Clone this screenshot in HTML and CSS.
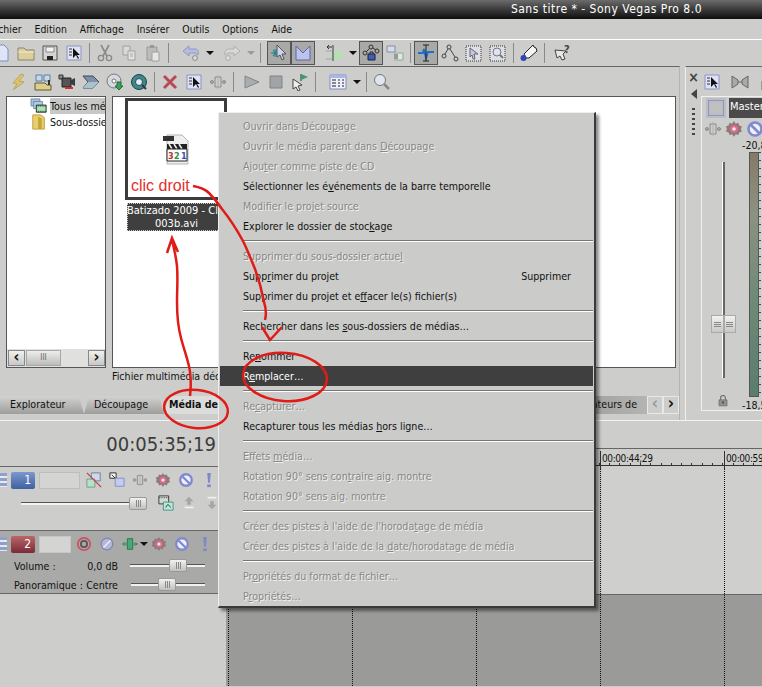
FILE: index.html
```html
<!DOCTYPE html>
<html lang="fr">
<head>
  <meta charset="UTF-8">
  <meta name="viewport" content="width=device-width, initial-scale=1.0">
  <title>Sans titre * - Sony Vegas Pro 8.0</title>
  <link rel="stylesheet" href="styles.css">
</head>
<body>

  <!-- icones de la barre d'outils -->
  <svg class="sprite" xmlns="http://www.w3.org/2000/svg">
    <symbol id="i-doc" viewBox="0 0 18 18"><path d="M3 1h8l4 4v12H3z" fill="#dfe4f6" stroke="#7f8fc8"/></symbol>
    <symbol id="i-folder" viewBox="0 0 18 18"><path d="M1 4h6l2 2h8v10H1z" fill="#dccf9f" stroke="#8c8464"/><path d="M1 8h16" stroke="#f3ecca"/></symbol>
    <symbol id="i-disk" viewBox="0 0 18 18"><path d="M2 2h14v14H2z" fill="#d5d5d3" stroke="#555"/><path d="M5 3h8v5H5z" fill="#f4f4f4" stroke="#888"/><path d="M6 12h6v4H6z" fill="#222"/></symbol>
    <symbol id="i-props" viewBox="0 0 18 18"><path d="M2 2h14v14H2z" fill="#dfe2f4" stroke="#8b93c4"/><path d="M4 5h3M4 8h3M4 11h3" stroke="#333"/><path d="M8 4v10l3-3 2 4 1-1-2-3h3z" fill="#111"/></symbol>
    <symbol id="i-cut" viewBox="0 0 18 18"><path d="M5 1l6 11M13 1L7 12" stroke="#8a8a8a" stroke-width="1.6" fill="none"/><circle cx="5" cy="14" r="2.6" fill="none" stroke="#8a8a8a" stroke-width="1.4"/><circle cx="13" cy="14" r="2.6" fill="none" stroke="#8a8a8a" stroke-width="1.4"/></symbol>
    <symbol id="i-copy" viewBox="0 0 18 18"><path d="M3 2h7v9H3z" fill="#d9d9d7" stroke="#a0a09e"/><path d="M8 7h7v9H8z" fill="#e2e2e0" stroke="#a0a09e"/><path d="M10 10h3M10 12h3" stroke="#aaa"/></symbol>
    <symbol id="i-paste" viewBox="0 0 18 18"><path d="M3 3h10v13H3z" fill="#bcbcba" stroke="#999"/><path d="M6 1h4v3H6z" fill="#999"/><path d="M8 8h7v9H8z" fill="#e6e6e4" stroke="#a0a09e"/></symbol>
    <symbol id="i-undo" viewBox="0 0 18 18"><path d="M1 7l6-5v3h6c3 0 4 3 3 6l-3-2H7v3z" fill="#b4bce0" stroke="#8f98c6"/><circle cx="13" cy="14" r="2.4" fill="#ddd" stroke="#888"/></symbol>
    <symbol id="i-redo" viewBox="0 0 18 18"><path d="M17 7l-6-5v3H6C3 5 1 8 2 11l3-2h6v3z" fill="#d8d8d6" stroke="#b0b0ae"/><circle cx="5" cy="14" r="2.4" fill="#ddd" stroke="#aaa"/></symbol>
    <symbol id="i-snap" viewBox="0 0 18 18"><path d="M1 9h7M5 5v8" stroke="#2f9a8a" stroke-width="1.5"/><path d="M3 6l4 6M7 6l-4 6" stroke="#2f7a9a"/><path d="M7 1l9 9-4 0 2 5-2 1-2-5-3 2z" fill="#cdd3f0" stroke="#555"/></symbol>
    <symbol id="i-env" viewBox="0 0 18 18"><path d="M2 2v14h14V2L9 9z" fill="#bcc4ec" stroke="#5a67ad"/></symbol>
    <symbol id="i-split" viewBox="0 0 18 18"><path d="M8 1v16" stroke="#666" stroke-width="1.4"/><path d="M9 7h8v8H9z" fill="#b4e0b4"/><path d="M1 7h6M1 15h6" stroke="#9aa" /><path d="M2 3h5M4 1L2 3l2 2" stroke="#333" fill="none"/></symbol>
    <symbol id="i-lock-net" viewBox="0 0 18 18"><circle cx="3" cy="9" r="2" fill="none" stroke="#333"/><circle cx="9" cy="3" r="2" fill="none" stroke="#333"/><circle cx="15" cy="7" r="2" fill="none" stroke="#333"/><path d="M4 8l4-4M11 4l3 2" stroke="#333"/><path d="M6 10h7v6H6z" fill="#3a5fb4" stroke="#223"/><path d="M8 10V8h3v2" fill="none" stroke="#223"/></symbol>
    <symbol id="i-group" viewBox="0 0 18 18"><path d="M1 2h8v6H1z" fill="#cfe0e8" stroke="#88a"/><path d="M9 9h8v7H9z" fill="#dfe8d8" stroke="#8a9"/><path d="M8 10h4v5H8z" fill="#999"/></symbol>
    <symbol id="i-motion" viewBox="0 0 18 18"><path d="M6 1h10v9H6z" fill="#cfd8e8" stroke="#6a7a98"/><path d="M1 8h9v9H1z" fill="#b8e0c8" stroke="#6a9a88"/><path d="M1 1l16 16" stroke="#c04040" stroke-width="1.400"/></symbol>
    <symbol id="i-pan" viewBox="0 0 18 18"><path d="M1 1h7v6H1z" fill="#f4f4f4" stroke="#222"/><path d="M3 3l4 4" stroke="#222"/><path d="M7 7h10v9H7z" fill="#c4cdf0" stroke="#8088c8"/></symbol>
    <symbol id="i-norm" viewBox="0 0 18 18"><path d="M1 9h5l1-4 2 9 2-6h6" fill="none" stroke="#1f6fd0" stroke-width="2"/><path d="M9 1v16M6 1h6M6 17h6" stroke="#222"/></symbol>
    <symbol id="i-nodes" viewBox="0 0 18 18"><circle cx="3" cy="12" r="2" fill="none" stroke="#444"/><circle cx="8" cy="3" r="2" fill="none" stroke="#444"/><circle cx="15" cy="15" r="2" fill="none" stroke="#444"/><path d="M4 10l3-5M9 5l5 8" stroke="#444"/></symbol>
    <symbol id="i-marq" viewBox="0 0 18 18"><path d="M1 2h15v15H1z" fill="#dfdfe8" stroke="#333" stroke-dasharray="1 1"/><path d="M5 4l8 6-4 0 1 5-2 0-1-4-2 2z" fill="#c4c8e4" stroke="#666"/></symbol>
    <symbol id="i-marq-zoom" viewBox="0 0 18 18"><path d="M1 2h15v15H1z" fill="#dfdfe8" stroke="#333" stroke-dasharray="1 1"/><circle cx="8" cy="8" r="4" fill="#dce4f4" stroke="#777"/><path d="M11 11l3 3" stroke="#777" stroke-width="2"/></symbol>
    <symbol id="i-hand" viewBox="0 0 18 18"><path d="M4 10l9-9 1 2 2 1 1 3-8 7-3 0z" fill="#f6f6f6" stroke="#222"/><circle cx="3.500" cy="14" r="3" fill="#3146b0"/></symbol>
    <symbol id="i-help" viewBox="0 0 18 18"><path d="M1 6l11 1-3 3 2 5-3 1-2-4-3 2z" fill="#e8e8e6" stroke="#444"/><text x="10" y="9" font-size="11" font-weight="bold" font-family="DejaVu Sans" fill="#444">?</text></symbol>
    <symbol id="i-bolt" viewBox="0 0 18 18"><path d="M11 1L3 10l4 1-4 6 11-8-5-1 5-6z" fill="#dcc46a" stroke="#b8a65c"/></symbol>
    <symbol id="i-explore" viewBox="0 0 18 18"><path d="M2 2h6v6H2zM10 2h6v6h-6z" fill="#c4dae8" stroke="#5a80a8"/><path d="M1 10h10l2 2h4v5H1z" fill="#dccf8c" stroke="#605a30"/><path d="M14 7h2v5h-2z" fill="#333"/></symbol>
    <symbol id="i-cam" viewBox="0 0 18 18"><path d="M1 2h4v4H1z" fill="#8a8a92" stroke="#333"/><path d="M4 5h9v9H4z" fill="#555" stroke="#222"/><path d="M13 7l4-2v8l-4-2z" fill="#3a3a42"/><path d="M7 15h8" stroke="#d03030" stroke-width="2"/></symbol>
    <symbol id="i-prism" viewBox="0 0 18 18"><path d="M1 3h10l6 6-6 6H1l5-6z" fill="#7e90a8" stroke="#3a4a5a"/><path d="M6 9h11l-6 6H1z" fill="#a9c2cc"/></symbol>
    <symbol id="i-cd" viewBox="0 0 18 18"><circle cx="8" cy="8" r="7" fill="#d6dae0" stroke="#777"/><circle cx="8" cy="8" r="2" fill="#fff" stroke="#777"/><path d="M11 9h4v4h2l-4 4-4-4h2z" fill="#3aa05a" stroke="#206a3a"/></symbol>
    <symbol id="i-globe" viewBox="0 0 18 18"><circle cx="9" cy="9" r="7.500" fill="#3a8a8a" stroke="#223f4f"/><circle cx="9" cy="9" r="3.500" fill="#e4ecf4" stroke="#345"/><path d="M12 12l4 4" stroke="#334" stroke-width="2"/></symbol>
    <symbol id="i-del" viewBox="0 0 18 18"><path d="M3 3l12 12M15 3L3 15" stroke="#b84a58" stroke-width="3"/></symbol>
    <symbol id="i-bus" viewBox="0 0 18 18"><path d="M6 4h6v10H6z" fill="none" stroke="#8a8a88"/><path d="M1 9h3M14 9h3" stroke="#8a8a88"/><circle cx="3" cy="9" r="1.500" fill="none" stroke="#8a8a88"/><circle cx="15" cy="9" r="1.500" fill="none" stroke="#8a8a88"/><path d="M9 2v14" stroke="#b0b0ae"/></symbol>
    <symbol id="i-bus-on" viewBox="0 0 18 18"><path d="M6 3h6v12H6z" fill="#4aa878" stroke="#2a7050"/><path d="M0 9h4M14 9h4" stroke="#2a8a60"/><circle cx="3" cy="9" r="1.500" fill="none" stroke="#2a8a60"/><circle cx="15" cy="9" r="1.500" fill="none" stroke="#2a8a60"/></symbol>
    <symbol id="i-play" viewBox="0 0 18 18"><path d="M2 3l14 6-14 6z" fill="#a8aeb0" stroke="#7f8688"/></symbol>
    <symbol id="i-stop" viewBox="0 0 18 18"><path d="M3 3h12v12H3z" fill="#a0a4a6" stroke="#808486"/></symbol>
    <symbol id="i-flag" viewBox="0 0 18 18"><path d="M10 1v7" stroke="#333"/><path d="M10 1l7 3-7 3z" fill="#3a9a6a"/><path d="M2 6l9 6-4 1 2 4-2 1-2-4-3 2z" fill="#eee" stroke="#444"/></symbol>
    <symbol id="i-table" viewBox="0 0 18 18"><path d="M1 2h16v14H1z" fill="#eef0fa" stroke="#7f8cc8"/><path d="M1 2h16v3H1z" fill="#aab6e8"/><path d="M3 7h4M3 10h4M3 13h4M9 7h2M9 10h2M9 13h2M13 7h2M13 10h2M13 13h2" stroke="#222"/></symbol>
    <symbol id="i-zoom" viewBox="0 0 18 18"><circle cx="7" cy="7" r="5.500" fill="#dfe6f2" stroke="#777"/><path d="M11 11l5 5" stroke="#888" stroke-width="2.500"/></symbol>
    <symbol id="i-fit" viewBox="0 0 18 18"><path d="M1 3l6 4v4l-6 4zM17 3l-6 4v4l6 4z" fill="#aaa" stroke="#666"/><path d="M7 9h4" stroke="#666"/></symbol>
    <symbol id="i-fx" viewBox="0 0 18 18"><path d="M9 0l2 3 3-1 1 3 3 1-1 3 1 3-3 1-1 3-3-1-2 3-2-3-3 1-1-3-3-1 1-3-1-3 3-1 1-3 3 1z" transform="translate(1 1) scale(.88)" fill="#8a7a78"/><circle cx="9" cy="9" r="4" fill="#e06a8a"/><circle cx="9" cy="9" r="1.800" fill="#eee"/></symbol>
    <symbol id="i-no" viewBox="0 0 18 18"><circle cx="9" cy="9" r="6.500" fill="#eef0fa" stroke="#7f8ad0" stroke-width="2.600"/><path d="M5 5l8 8" stroke="#7f8ad0" stroke-width="2.600"/></symbol>
    <symbol id="i-solo" viewBox="0 0 18 18"><path d="M7 1h4l-1 11H8z" fill="#8088c8"/><path d="M7 14h4v3H7z" fill="#8088c8"/></symbol>
    <symbol id="i-rec" viewBox="0 0 18 18"><circle cx="9" cy="9" r="7" fill="none" stroke="#d05060" stroke-width="2"/><circle cx="9" cy="9" r="3.500" fill="none" stroke="#555" stroke-width="2"/></symbol>
    <symbol id="i-mute2" viewBox="0 0 18 18"><circle cx="9" cy="9" r="6.500" fill="#b4b8d8" stroke="#7f84b8" stroke-width="1.400"/><path d="M5 13l8-8" stroke="#eee" stroke-width="1.600"/></symbol>
    <symbol id="i-comp" viewBox="0 0 18 18"><path d="M1 1h11v9H1z" fill="#d0d8d0" stroke="#333"/><path d="M1 3h11" stroke="#333" stroke-dasharray="1 1"/><path d="M6 8h11v9H6z" fill="#b8e8d8" stroke="#4a8a8a"/><path d="M9 14c1-4 3-4 5 0" fill="none" stroke="#222"/></symbol>
    <symbol id="i-up" viewBox="0 0 18 18"><path d="M9 2l5 5h-3v4H7V7H4z" fill="#a4a8a4"/><path d="M4 14h10" stroke="#f0f0ee" stroke-width="2"/></symbol>
    <symbol id="i-down" viewBox="0 0 18 18"><path d="M9 16l5-5h-3V7H7v4H4z" fill="#a4a8a4"/><path d="M4 3h10" stroke="#f0f0ee" stroke-width="2"/></symbol>
    <symbol id="i-lock" viewBox="0 0 18 18"><path d="M3 8h12v9H3z" fill="#8f8f8f" stroke="#666"/><path d="M5.500 8V5a3.500 3.500 0 0 1 7 0v3" fill="none" stroke="#666" stroke-width="1.600"/><circle cx="9" cy="12" r="1.500" fill="#444"/></symbol>
  </svg>

  <div class="titlebar">Sans titre * - Sony Vegas Pro 8.0</div>

  <nav class="menubar">
    <span class="menu-first">Fichier</span>
    <span>Edition</span>
    <span>Affichage</span>
    <span>Insérer</span>
    <span>Outils</span>
    <span>Options</span>
    <span>Aide</span>
  </nav>

  <div class="toolbar toolbar-main">
    <span class="tool"><svg><use href="#i-doc"/></svg></span>
    <span class="tool"><svg><use href="#i-folder"/></svg></span>
    <span class="tool"><svg><use href="#i-disk"/></svg></span>
    <span class="tool"><svg><use href="#i-props"/></svg></span>
    <i class="sep"></i>
    <span class="tool"><svg><use href="#i-cut"/></svg></span>
    <span class="tool"><svg><use href="#i-copy"/></svg></span>
    <span class="tool"><svg><use href="#i-paste"/></svg></span>
    <i class="sep"></i>
    <span class="tool tool-push-wide"><svg><use href="#i-undo"/></svg></span>
    <span class="drop"></span>
    <span class="tool tool-push"><svg><use href="#i-redo"/></svg></span>
    <span class="drop drop-off"></span>
    <i class="sep sep-wide"></i>
    <span class="tool pressed"><svg><use href="#i-snap"/></svg></span>
    <span class="tool pressed"><svg><use href="#i-env"/></svg></span>
    <span class="tool tool-push-wide"><svg><use href="#i-split"/></svg></span>
    <span class="drop"></span>
    <span class="tool pressed"><svg><use href="#i-lock-net"/></svg></span>
    <span class="tool"><svg><use href="#i-group"/></svg></span>
    <i class="sep"></i>
    <span class="tool pressed"><svg><use href="#i-norm"/></svg></span>
    <span class="tool"><svg><use href="#i-nodes"/></svg></span>
    <span class="tool"><svg><use href="#i-marq"/></svg></span>
    <span class="tool"><svg><use href="#i-marq-zoom"/></svg></span>
    <i class="sep"></i>
    <span class="tool"><svg><use href="#i-hand"/></svg></span>
    <i class="sep sep-wide"></i>
    <span class="tool"><svg><use href="#i-help"/></svg></span>
  </div>

  <div class="workspace">
    <section class="left-dock">
      <div class="toolbar toolbar-media">
        <span class="tool"><svg><use href="#i-bolt"/></svg></span>
        <span class="tool"><svg><use href="#i-explore"/></svg></span>
        <span class="tool"><svg><use href="#i-cam"/></svg></span>
        <span class="tool"><svg><use href="#i-prism"/></svg></span>
        <span class="tool"><svg><use href="#i-cd"/></svg></span>
        <span class="tool"><svg><use href="#i-globe"/></svg></span>
        <i class="sep"></i>
        <span class="tool"><svg><use href="#i-del"/></svg></span>
        <span class="tool"><svg><use href="#i-props"/></svg></span>
        <span class="tool"><svg><use href="#i-bus"/></svg></span>
        <i class="sep sep-wide"></i>
        <span class="tool"><svg><use href="#i-play"/></svg></span>
        <span class="tool"><svg><use href="#i-stop"/></svg></span>
        <span class="tool"><svg><use href="#i-flag"/></svg></span>
        <i class="sep"></i>
        <span class="tool tool-push-wide"><svg><use href="#i-table"/></svg></span>
        <span class="drop"></span>
        <i class="sep"></i>
        <span class="tool"><svg><use href="#i-zoom"/></svg></span>
      </div>

      <div class="panes">
        <div class="tree">
          <div class="tree-list">
            <div class="tree-row">
              <svg viewBox="0 0 18 18"><path d="M0 1h10v8H0z" fill="#a8c0dc" stroke="#6a88a8"/><path d="M3 4h10v8H3z" fill="#b4cce4" stroke="#6a88a8"/><path d="M6 8h11v8H6z" fill="#a8e4b4" stroke="#222"/><path d="M6 9h11M6 15h11" stroke="#222" stroke-dasharray="1 1"/></svg>
              <span class="tree-label selected">Tous les médias</span>
            </div>
            <div class="tree-row">
              <svg viewBox="0 0 18 18"><path d="M2 1h9l4 3v13H2z" fill="#e8cf6a" stroke="#b89c3a"/><path d="M8 3l4 2v12H8z" fill="#c4a43e"/></svg>
              <span class="tree-label">Sous-dossiers</span>
            </div>
          </div>
          <div class="hscroll">
            <span class="scroll-btn">‹</span>
            <span class="scroll-thumb">III</span>
            <span class="scroll-btn scroll-next">›</span>
          </div>
        </div>

        <div class="media-list">
          <figure class="clip">
            <div class="clip-frame">
              <svg class="clip-icon" viewBox="0 0 28 32">
                <path d="M5 2h15l6 6v23H5z" fill="#efefef" stroke="#b4b4b4"/>
                <path d="M1 3h11v5H1z" fill="#333"/>
                <path d="M5 11h20v5H5z" fill="#222"/>
                <path d="M7 11l3 5M12 11l3 5M17 11l3 5" stroke="#eee" stroke-width="1.500"/>
                <path d="M5 16h20v12H5z" fill="#fff" stroke="#222"/>
                <text x="6" y="26" class="num num-r">3</text>
                <text x="12" y="26" class="num num-g">2</text>
                <text x="19" y="26" class="num num-b">1</text>
              </svg>
            </div>
            <figcaption>Batizado 2009 - Clip<br>003b.avi</figcaption>
          </figure>
        </div>
      </div>

      <p class="status">Fichier multimédia décodé</p>

      <div class="tabs">
        <span class="tab tab-first">Explorateur</span>
        <span class="tab">Découpage</span>
        <span class="tab tab-active">Média de projet</span>
        <span class="tab-rest">Générateurs de</span>
        <span class="tab-nav tab-nav-off">‹</span>
        <span class="tab-nav">›</span>
      </div>
    </section>

    <aside class="right-dock">
      <div class="grip">
        <span class="grip-close">×</span>
        <span class="grip-arrow"></span>
        <span class="grip-dots"></span>
      </div>
      <div class="mixer-col">
        <div class="mixer-tools">
          <span class="tool"><svg><use href="#i-props"/></svg></span>
          <span class="tool"><svg><use href="#i-fit"/></svg></span>
          <span class="tool"><svg><use href="#i-lock"/></svg></span>
        </div>
        <div class="mixer">
          <div class="master-head">
            <span class="master-btn"></span>
            <span class="master-name">Master</span>
          </div>
          <div class="master-icons">
            <span class="tool-sm"><svg><use href="#i-bus"/></svg></span>
            <span class="tool-sm"><svg><use href="#i-fx"/></svg></span>
            <span class="tool-sm"><svg><use href="#i-no"/></svg></span>
          </div>
          <div class="level-top">-20,8</div>
          <div class="fader-row">
            <div class="fader-col">
              <div class="fader-track">
                <div class="fader-thumb"><i></i><i></i></div>
              </div>
              <svg class="fader-lock"><use href="#i-lock"/></svg>
            </div>
            <div class="meter-col">
              <div class="meter"></div>
            </div>
          </div>
          <div class="level-bottom">-18,5</div>
        </div>
      </div>
    </aside>
  </div>

  <div class="timeline">
    <div class="tracks">
      <div class="timecode">00:05:35;19</div>

      <div class="track">
        <div class="track-row">
          <span class="track-grip"></span>
          <span class="track-num track-num-video">1</span>
          <span class="track-name"></span>
          <span class="cell"><svg><use href="#i-motion"/></svg></span>
          <span class="cell"><svg><use href="#i-pan"/></svg></span>
          <span class="cell"><svg><use href="#i-bus"/></svg></span>
          <span class="cell"><svg><use href="#i-fx"/></svg></span>
          <span class="cell"><svg><use href="#i-no"/></svg></span>
          <span class="cell"><svg><use href="#i-solo"/></svg></span>
        </div>
        <div class="track-row track-row-fader">
          <div class="slider slider-level"><i class="rail"></i><i class="thumb"></i></div>
          <span class="cell cell-first"><svg><use href="#i-comp"/></svg></span>
          <span class="cell"><svg><use href="#i-up"/></svg></span>
          <span class="cell"><svg><use href="#i-down"/></svg></span>
        </div>
      </div>

      <div class="track track-audio">
        <div class="track-row">
          <span class="track-grip"></span>
          <span class="track-num track-num-audio">2</span>
          <span class="track-name track-name-audio"></span>
          <span class="cell"><svg><use href="#i-rec"/></svg></span>
          <span class="cell"><svg><use href="#i-mute2"/></svg></span>
          <span class="cell"><svg><use href="#i-bus-on"/></svg></span>
          <span class="drop drop-mini"></span>
          <span class="cell"><svg><use href="#i-fx"/></svg></span>
          <span class="cell"><svg><use href="#i-no"/></svg></span>
          <span class="cell"><svg><use href="#i-solo"/></svg></span>
        </div>
        <div class="audio-row">
          <span class="audio-label">Volume :</span>
          <span class="audio-value">0,0 dB</span>
          <div class="slider slider-vol"><i class="rail"></i><i class="thumb"></i><i class="rail"></i></div>
        </div>
        <div class="audio-row">
          <span class="audio-label">Panoramique :</span>
          <span class="audio-value">Centre</span>
          <div class="slider slider-pan"><i class="rail"></i><i class="thumb"></i><i class="rail"></i></div>
        </div>
      </div>
    </div>

    <div class="timeline-main">
      <div class="timeline-head"></div>
      <div class="ruler">
        <span class="mark">00:00:00;00</span>
        <span class="mark">00:00:14;29</span>
        <span class="mark">00:00:29;29</span>
        <span class="mark">00:00:44;29</span>
        <span class="mark mark-last">00:00:59;28</span>
      </div>
      <div class="timeline-body">
        <i class="beat"></i><i class="beat"></i><i class="beat"></i><i class="beat"></i><i class="beat"></i>
      </div>
    </div>
  </div>

  <!-- menu contextuel -->
  <div class="context-menu">
    <div class="item off">Ouvrir dans Décou<u>p</u>age</div>
    <div class="item off">Ouvrir le média parent dans <u>D</u>écoupage</div>
    <div class="item off">Ajou<u>t</u>er comme piste de CD</div>
    <div class="item">Sélectionner les é<u>v</u>énements de la barre temporelle</div>
    <div class="item off">Modifier le pro<u>j</u>et source</div>
    <div class="item">Explorer le dossier de stoc<u>k</u>age</div>
    <hr>
    <div class="item off">Supprimer du sous-dossier actue<u>l</u></div>
    <div class="item item-split">Supp<u>r</u>imer du projet<span class="shortcut">Supprimer</span></div>
    <div class="item">Supprimer du projet et e<u>f</u>facer le(s) fichier(s)</div>
    <hr>
    <div class="item">Rechercher dans les <u>s</u>ous-dossiers de médias…</div>
    <hr>
    <div class="item">Re<u>n</u>ommer</div>
    <div class="item active">R<u>e</u>mplacer…</div>
    <hr>
    <div class="item off">Re<u>c</u>apturer…</div>
    <div class="item">Recapturer tous les médias <u>h</u>ors ligne…</div>
    <hr>
    <div class="item off">Effets <u>m</u>édia…</div>
    <div class="item off">Rotation 90° sens con<u>t</u>raire aig. montre</div>
    <div class="item off">Rotation 90° sens aig. montre</div>
    <hr>
    <div class="item off">Créer des pistes à l'aide de l'horoda<u>t</u>age de média</div>
    <div class="item off">Créer des pistes à l'aide de la <u>d</u>ate/horodatage de média</div>
    <hr>
    <div class="item off">Pr<u>o</u>priétés du format de fichier…</div>
    <div class="item off">P<u>r</u>opriétés…</div>
  </div>

  <!-- annotations rouges par-dessus la capture -->
  <span class="note">clic droit</span>
  <svg class="scribble" viewBox="0 0 762 687">
    <path d="M193 186c6 1 11 2 16 7 5 5 9 10 13 16 8 10 15 21 21 32 4 8 8 18 12 28 4 11 7 22 9 33 2 6 2 14 1 18M262 327l8 13 12-13"/>
    <path d="M190 396c1-8 1-16 0-24-1-10-6-22-9-34-3-11-4-24-4-36 0-12 1-24 0-36-1-9-3-18-5-26M167 253l5-15 6 14"/>
    <ellipse cx="196" cy="409" rx="32" ry="19" transform="rotate(6 196 409)"/>
    <ellipse cx="285" cy="377" rx="42" ry="24" transform="rotate(4 285 377)"/>
  </svg>

</body>
</html>
```

FILE: styles.css
```css
* {
  box-sizing: border-box;
}

body {
  position: relative;
  width: 762px;
  height: 687px;
  margin: 0;
  overflow: hidden;
  background-color: #cdcdcb;
  color: #111;
  font-family: "DejaVu Sans", Verdana, sans-serif;
  font-stretch: condensed;
  font-size: 10.6px;
}

.sprite {
  display: none;
}

svg {
  display: block;
}

/* barre de titre */
.titlebar {
  height: 19px;
  padding-right: 60px;
  background: linear-gradient(#6c6c6c, #3f3f3f 45%, #0e0e0e);
  color: #fff;
  font-size: 12px;
  letter-spacing: .5px;
  line-height: 18px;
  text-align: right;
}

.menubar {
  display: flex;
  gap: 13px;
  height: 21px;
  padding-top: 1px;
  border-bottom: 1px solid #fff;
  font-size: 10.4px;
  line-height: 19px;
}

.menu-first {
  margin-left: -9px;
}

/* barres d'outils */
.toolbar {
  display: flex;
  align-items: center;
}

.toolbar-main {
  height: 26px;
  margin-left: -10px;
}

.toolbar-media {
  height: 29px;
  margin-left: 7px;
}

.tool {
  display: flex;
  flex: none;
  align-items: center;
  justify-content: center;
  width: 24px;
  height: 24px;
}

.tool svg {
  width: 18px;
  height: 18px;
}

.tool-push {
  margin-left: 4px;
}

.tool-push-wide {
  margin-left: 7px;
}

.pressed {
  border: 1px solid #555;
  background-color: #a9a9a7;
}

.sep {
  flex: none;
  width: 1px;
  height: 20px;
  margin: 0 3px;
  background-color: #8a8a88;
}

.sep-wide {
  margin-right: 6px;
}

.drop {
  position: relative;
  flex: none;
  width: 13px;
  height: 24px;
}

.drop::after {
  content: "";
  position: absolute;
  top: 10px;
  left: 3px;
  border: 4px solid transparent;
  border-top-color: #111;
  border-bottom: 0;
}

.drop-off::after {
  border-top-color: #999;
}

.workspace {
  display: flex;
  height: 355px;
  border-bottom: 1px solid #f2f2f0;
}

/* panneau gauche */
.left-dock {
  flex: none;
  width: 680px;
  border-top: 1px solid #666;
  border-right: 1px solid #b4b4b2;
}

.panes {
  display: flex;
  gap: 6px;
  height: 272px;
  padding: 0 3px 0 6px;
}

.tree {
  display: flex;
  flex: none;
  flex-direction: column;
  justify-content: space-between;
  width: 100px;
  border: 1px solid #555;
  background-color: #fff;
  overflow: hidden;
}

.tree-list {
  padding: 1px 0 0 23px;
}

.tree-row {
  display: flex;
  gap: 2px;
  height: 16px;
  line-height: 16px;
  white-space: nowrap;
}

.tree-row svg {
  flex: none;
  width: 18px;
  height: 16px;
}

.tree-label {
  flex: 1;
  overflow: hidden;
}

.selected {
  background-color: #c8c8c6;
}

.hscroll {
  display: flex;
  height: 18px;
  padding: 1px 0 1px 1px;
  background-color: #e0e0de;
}

.scroll-btn {
  flex: none;
  width: 17px;
  border: 1px solid #888;
  background: linear-gradient(#f0f0ee, #c8c8c6);
  font-size: 16px;
  font-weight: bold;
  line-height: 12px;
  text-align: center;
}

.scroll-thumb {
  flex: none;
  width: 35px;
  margin-left: 1px;
  border: 1px solid #a8a8a6;
  background: linear-gradient(#eee, #bcbcba);
  color: #666;
  font-size: 8px;
  line-height: 13px;
  text-align: center;
}

.scroll-next {
  margin-left: auto;
}

.media-list {
  flex: 1;
  border: 1px solid #555;
  background-color: #fff;
}

.clip {
  width: 102px;
  margin: 1px 0 0 12px;
}

.clip-frame {
  display: flex;
  align-items: center;
  justify-content: center;
  height: 102px;
  border: 3px solid #3c3c3c;
}

.clip-icon {
  width: 28px;
  height: 32px;
}

.num {
  font-family: "DejaVu Sans", sans-serif;
  font-size: 9px;
  font-weight: bold;
}

.num-r {
  fill: #c03030;
}

.num-g {
  fill: #309040;
}

.num-b {
  fill: #3050b0;
}

.clip figcaption {
  width: 99px;
  margin: 3px 0 0 2px;
  padding: 1px 0;
  outline: 1px dotted #ccc;
  outline-offset: -1px;
  background-color: #3f3f3f;
  color: #fff;
  font-size: 11px;
  line-height: 13px;
  text-align: center;
  white-space: nowrap;
  overflow: hidden;
}

.status {
  height: 28px;
  margin: 0;
  padding-left: 112px;
  line-height: 16px;
}

/* onglets */
.tabs {
  display: flex;
  align-items: stretch;
  height: 18px;
  line-height: 16px;
}

.tab {
  flex: none;
  width: 80px;
  padding-left: 10px;
  background: linear-gradient(#d2d2d0, #9e9e9c);
  clip-path: polygon(5px 0, calc(100% - 5px) 0, 100% 100%, 0 100%);
}

.tab-first {
  width: 84px;
  clip-path: polygon(0 0, calc(100% - 5px) 0, 100% 100%, 0 100%);
}

.tab-active {
  width: 100px;
  padding-left: 5px;
  background: #dcdcda;
  font-weight: bold;
  white-space: nowrap;
}

.tab-rest {
  flex: 1;
  padding-right: 10px;
  overflow: hidden;
  background: linear-gradient(90deg, #6f6f6d, #8f8f8d 70%, #b4b4b2);
  text-align: right;
  white-space: nowrap;
}

.tab-nav {
  flex: none;
  width: 16px;
  border: 1px solid #e8e8e6;
  background-color: #cdcdcb;
  font-size: 17px;
  font-weight: bold;
  line-height: 13px;
  text-align: center;
}

.tab-nav-off {
  color: #9a9a98;
}

/* panneau droit */
.right-dock {
  display: flex;
  flex: 1;
  min-width: 0;
  margin-left: 5px;
  border-top: 1px solid #666;
  border-left: 1px solid #eee;
}

.grip {
  display: flex;
  flex: none;
  flex-direction: column;
  align-items: center;
  width: 15px;
  padding-top: 4px;
}

.grip-close {
  color: #444;
  font-size: 14px;
  font-weight: bold;
  line-height: 12px;
}

.grip-arrow {
  margin-top: 6px;
  border: 5px solid transparent;
  border-right: 6px solid #444;
  border-left: 0;
}

.grip-dots {
  width: 3px;
  height: 28px;
  margin-top: 9px;
  background: repeating-linear-gradient(#444 0 2px, transparent 2px 5px);
}

.mixer-col {
  flex: 1;
  min-width: 0;
  overflow: hidden;
}

.mixer-tools {
  display: flex;
  align-items: center;
  gap: 4px;
  height: 29px;
  margin-left: -1px;
}

.mixer {
  height: 315px;
  padding-left: 4px;
  border-top: 1px solid #f0f0ee;
  border-bottom: 1px solid #f0f0ee;
  border-left: 1px solid #f0f0ee;
}

.master-head {
  display: flex;
  gap: 3px;
  height: 20px;
  margin-top: 1px;
}

.master-btn {
  flex: none;
  width: 20px;
  height: 20px;
  border: 5px solid #b8bccf;
  outline: 1px solid #999;
  outline-offset: -3px;
  background-color: #c0c0be;
}

.master-name {
  flex: 1;
  padding-left: 1px;
  background-color: #4a4a4a;
  color: #fff;
  font-size: 11px;
  line-height: 18px;
  white-space: nowrap;
}

.master-icons {
  display: flex;
  align-items: center;
  gap: 3px;
  height: 20px;
  margin: 1px 0 0 -2px;
}

.tool-sm svg {
  width: 18px;
  height: 18px;
}

.level-top {
  height: 13px;
  padding-left: 36px;
  line-height: 13px;
  white-space: nowrap;
}

.fader-row {
  display: flex;
  height: 247px;
}

.fader-col {
  flex: none;
  width: 41px;
  padding-top: 10px;
}

.fader-track {
  position: relative;
  width: 3px;
  height: 216px;
  margin-left: 16px;
  border-left: 1px solid #fff;
  background-color: #666;
}

.fader-thumb {
  position: absolute;
  top: 153px;
  left: -12px;
  display: flex;
  width: 25px;
  height: 18px;
}

.fader-thumb i {
  flex: 1;
  border: 1px solid #aaa;
  background: repeating-linear-gradient(#888 0 1px, transparent 1px 2px) center / 7px 5px no-repeat, linear-gradient(#f2f2f0, #c8c8c6);
}

.fader-lock {
  width: 12px;
  height: 13px;
  margin: 16px 0 0 11px;
}

.meter-col {
  width: 16px;
  padding-left: 2px;
  background: repeating-linear-gradient(#444 0 1px, transparent 1px 8px) 12px 0 / 2px 100% no-repeat;
}

.meter {
  width: 10px;
  height: 245px;
  border: 1px solid #555;
  background: linear-gradient(#867a68, #8c9280 25%, #6f8a78 60%, #5c7c6c);
}

.level-bottom {
  padding-left: 36px;
  line-height: 13px;
  white-space: nowrap;
}

/* timeline */
.timeline {
  display: flex;
  height: 265px;
}

.tracks {
  flex: none;
  width: 226px;
}

.timecode {
  height: 46px;
  padding: 10px 10px 0 0;
  border-bottom: 1px solid #666;
  color: #3c3c3c;
  font-size: 20px;
  line-height: 26px;
  text-align: right;
}

.track {
  height: 64px;
  padding-top: 3px;
  border-bottom: 1px solid #666;
}

.track-audio {
  height: 63px;
  background-color: #a9a9a7;
}

.track-row {
  display: flex;
  align-items: center;
  height: 20px;
}

.track-row-fader {
  margin-top: 3px;
}

.track-grip {
  flex: none;
  width: 7px;
  height: 14px;
  background: repeating-linear-gradient(#8ea0cc 0 3px, #e8e8ee 3px 5px);
}

.track-num {
  flex: none;
  width: 24px;
  height: 17px;
  margin-left: 4px;
  padding-right: 4px;
  border-radius: 2px;
  color: #fff;
  font-size: 12px;
  line-height: 17px;
  text-align: right;
}

.track-num-video {
  background: linear-gradient(#7c97cf, #40609f);
}

.track-num-audio {
  background: linear-gradient(#b66, #7a2a3a);
}

.track-name {
  flex: none;
  width: 41px;
  height: 17px;
  margin: 0 2px 0 4px;
  border: 1px solid #bdbdbb;
  background-color: #d4d4d2;
}

.track-name-audio {
  width: 32px;
  margin-right: 1px;
  border-color: #c6c6c4;
}

.cell {
  display: flex;
  flex: none;
  align-items: center;
  justify-content: center;
  width: 23px;
  height: 20px;
}

.cell svg {
  width: 16px;
  height: 16px;
}

.cell-first {
  margin-left: 7px;
}

.drop-mini {
  width: 10px;
  margin-left: -4px;
}

.slider {
  display: flex;
  flex: none;
  align-items: center;
  height: 14px;
}

.rail {
  flex: 1;
  height: 3px;
  border-top: 1px solid #555;
  background-color: #f2f2f0;
}

.thumb {
  flex: none;
  width: 18px;
  height: 13px;
  border: 1px solid #999;
  border-radius: 2px;
  background: repeating-linear-gradient(90deg, #888 0 1px, transparent 1px 2px) center / 5px 7px no-repeat, linear-gradient(#f2f2f0, #c0c0be);
}

.slider-level {
  width: 126px;
  margin-left: 21px;
}

.audio-row {
  display: flex;
  align-items: center;
  height: 19px;
  padding-left: 14px;
}

.track-row + .audio-row {
  margin-top: 2px;
}

.audio-label {
  flex: none;
  width: 72px;
  white-space: nowrap;
}

.audio-value {
  flex: none;
  width: 32px;
  text-align: right;
  white-space: nowrap;
}

.slider-vol {
  width: 75px;
  margin-left: 12px;
}

.slider-vol .rail:first-child {
  flex: 0 0 39px;
}

.slider-pan {
  width: 74px;
  margin-left: 13px;
}

.slider-pan .rail:first-child {
  flex: 0 0 27px;
}

.timeline-main {
  display: flex;
  flex: 1;
  flex-direction: column;
  min-width: 0;
}

.timeline-head {
  flex: none;
  height: 28px;
  border-bottom: 1px solid #666;
}

.ruler {
  display: flex;
  flex: none;
  height: 20px;
  padding: 2px 0 0 2px;
  background:
    linear-gradient(#333, #333) 0 16px / 100% 1px no-repeat,
    repeating-linear-gradient(90deg, #333 0 1px, transparent 1px 10.3px) 2px 14px / 100% 3px no-repeat;
  font-size: 10px;
  letter-spacing: -.4px;
  line-height: 15px;
  white-space: nowrap;
}

.mark {
  flex: none;
  width: 124px;
  padding-left: 1px;
  border-left: 1px solid #333;
}

.mark-last {
  flex: 1;
  overflow: hidden;
}

.timeline-body {
  display: flex;
  flex: 1;
  padding-left: 2px;
  background: linear-gradient(#cfcfcd 125px, #666 125px 126px, #9a9a98 126px);
}

.beat {
  flex: none;
  width: 124px;
  border-left: 1px dotted #111;
}

/* menu contextuel */
.context-menu {
  position: absolute;
  top: 112px;
  left: 218px;
  width: 378px;
  height: 496px;
  padding: 3px 1px;
  border: 1px solid #eee;
  border-right: 2px solid #3a3a3a;
  border-bottom: 2px solid #3a3a3a;
  background-color: #cbcbc9;
  box-shadow: 3px 3px 3px rgba(0, 0, 0, .45);
}

.item {
  height: 20px;
  padding: 0 23px;
  line-height: 20px;
  white-space: nowrap;
}

.item-split {
  display: flex;
  padding-right: 22px;
}

.off {
  color: #878785;
  text-shadow: 1px 1px 0 #f2f2f0;
}

.active {
  background-color: #3f3f3f;
  color: #fff;
}

.shortcut {
  margin-left: auto;
}

.context-menu hr {
  height: 2px;
  margin: 4px 0 4px 23px;
  border: 0;
  border-top: 1px solid #777;
  border-bottom: 1px solid #fff;
}

/* annotations */
.note {
  position: absolute;
  top: 176px;
  left: 131px;
  color: #e0302c;
  font-family: "Liberation Sans", Arial, sans-serif;
  font-stretch: normal;
  font-size: 16px;
  line-height: 20px;
}

.scribble {
  position: absolute;
  top: 0;
  left: 0;
  width: 762px;
  height: 687px;
  pointer-events: none;
}

.scribble path, .scribble ellipse {
  fill: none;
  stroke: #e01c18;
  stroke-width: 2.5;
}
```
